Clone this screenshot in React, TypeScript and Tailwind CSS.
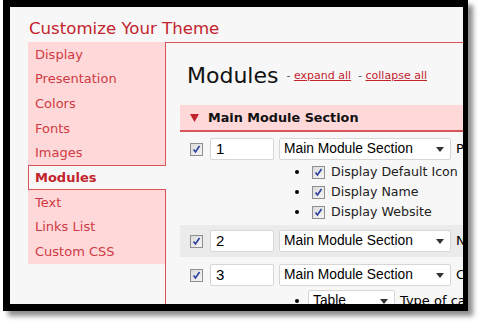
import React from "react";

const Check = () => (
  <span className="inline-flex h-[13px] w-[13px] shrink-0 items-center justify-center border border-[#8f8f8f] bg-gradient-to-br from-[#dcdcdc] to-[#f4f4f4]">
    <svg width="9" height="9" viewBox="0 0 9 9">
      <path d="M1.5 4.5 L3.5 7 L7.5 1" fill="none" stroke="#2a3f9e" strokeWidth="1.6" />
    </svg>
  </span>
);

const Select = ({ label, w }: { label: string; w: string }) => (
  <div className={`flex h-[22px] ${w} shrink-0 items-center justify-between rounded-[2px] border border-[#d6d6d6] bg-white pl-[4px] pr-[6px] font-['Liberation_Sans'] text-[13.8px] text-black`}>
    <span>{label}</span>
    <svg width="8" height="5" viewBox="0 0 8 5">
      <path d="M0 0 H8 L4 5 Z" fill="#333" />
    </svg>
  </div>
);

const NumInput = ({ v }: { v: string }) => (
  <div className="flex h-[22px] w-[64px] shrink-0 items-center rounded-[2px] border border-[#d6d6d6] bg-white pl-[5px] font-['Liberation_Sans'] text-[15px] text-black">
    {v}
  </div>
);

const Row = ({ n, tail, band }: { n: string; tail: string; band?: boolean }) => (
  <div className={`flex items-center pl-[10px] ${band ? "bg-[#ebebeb] py-[5px]" : "py-[3px]"}`}>
    <Check />
    <div className="ml-[7px]">
      <NumInput v={n} />
    </div>
    <div className="ml-[5px]">
      <Select label="Main Module Section" w="w-[172px]" />
    </div>
    <span className="ml-[5px] whitespace-nowrap text-[13px]">{tail}</span>
  </div>
);

const SubCheck = ({ label }: { label: string }) => (
  <div className="flex h-[20px] items-center">
    <span className="h-[4px] w-[4px] rounded-full bg-black" />
    <span className="ml-[13px]">
      <Check />
    </span>
    <span className="ml-[6px] whitespace-nowrap text-[12.6px] text-[#222]">{label}</span>
  </div>
);

export default function App() {
  const nav = ["Display", "Presentation", "Colors", "Fonts", "Images", "Modules", "Text", "Links List", "Custom CSS"];
  return (
    <div className="h-[321px] w-[481px] bg-white pl-[3px]">
      <div className="h-[311px] w-[465px] overflow-hidden border-y-[7px] border-l-[7px] border-r-[5px] border-black bg-[#f7f7f7] font-['DejaVu_Sans',sans-serif] shadow-[5px_5px_5px_rgba(0,0,0,0.45)]">
        <div className="flex h-[35px] items-end pb-[4px] pl-[19px] text-[16.6px] leading-none text-[#c3232c]">
          Customize Your Theme
        </div>
        <div className="flex">
          <div className="w-[155px] shrink-0 pl-[18px]">
            <div className="w-[137px]">
              {nav.map((item) =>
                item === "Modules" ? (
                  <div
                    key={item}
                    className="relative z-10 -mr-[1px] flex h-[24.7px] items-center border border-r-0 border-[#d9545a] bg-[#f7f7f7] pl-[6px] text-[13px] font-bold text-[#c3232c]"
                  >
                    {item}
                  </div>
                ) : (
                  <div
                    key={item}
                    className="flex h-[24.7px] items-center bg-[#ffd9d9] pl-[7px] text-[13px] text-[#d03a44]"
                  >
                    {item}
                  </div>
                )
              )}
            </div>
          </div>
          <div className="min-h-[300px] flex-1 border-l border-t border-[#d9545a] pl-[14px] text-black">
            <div className="flex h-[62px] items-end pb-[18px] pl-[7px]">
              <span className="text-[22px] leading-none text-[#111]">Modules</span>
              <span className="ml-[8px] mb-[3px] text-[11px] text-[#555]">
                - <span className="text-[#c3232c] underline">expand all</span>
                <span className="ml-[7px]">- </span>
                <span className="text-[#c3232c] underline">collapse all</span>
              </span>
            </div>
            <div className="flex h-[27px] items-center border-b-2 border-[#d9545a] bg-[#ffd9d9] pl-[10px]">
              <svg width="9" height="8" viewBox="0 0 9 8">
                <path d="M0 0 H9 L4.5 8 Z" fill="#c3232c" />
              </svg>
              <span className="ml-[9px] text-[12.8px] font-bold text-[#111]">Main Module Section</span>
            </div>
            <div className="mt-[3px]">
              <Row n="1" tail="P" />
              <div className="-mt-[1px] pl-[115px]">
                <SubCheck label="Display Default Icon" />
                <SubCheck label="Display Name" />
                <SubCheck label="Display Website" />
              </div>
              <div className="mt-[3px]">
                <Row n="2" tail="N" band />
              </div>
              <div className="mt-[4px]">
                <Row n="3" tail="C" />
              </div>
              <div className="mt-[1px] flex items-center pl-[115px]">
                <span className="h-[4px] w-[4px] rounded-full bg-black" />
                <div className="ml-[9px]">
                  <Select label="Table" w="w-[87px]" />
                </div>
                <span className="ml-[5px] whitespace-nowrap text-[13px]">Type of ca</span>
              </div>
            </div>
          </div>
        </div>
      </div>
    </div>
  );
}
